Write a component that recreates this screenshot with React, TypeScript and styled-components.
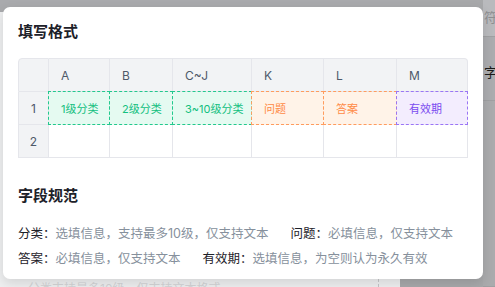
import React from "react";
import styled, { createGlobalStyle } from "styled-components";

const GlobalStyle = createGlobalStyle`
    html, body {
        margin: 0;
        padding: 0;
        width: 495px;
        height: 287px;
        overflow: hidden;
        font-family: Inter, "Noto Sans CJK SC", "Noto Sans", sans-serif;
    }
    * {
        box-sizing: border-box;
    }
`;

type Tone = "green" | "orange" | "purple";

const TONES: Record<Tone, { text: string; bg: string; border: string }> = {
    green: { text: "#13c07f", bg: "#e5faf1", border: "#22c98d" },
    orange: { text: "#ff8a45", bg: "#fff3e8", border: "#ff9c5e" },
    purple: { text: "#7a4cf0", bg: "#f3edfe", border: "#9a75f5" },
};

// ---- page behind the dialog (under the mask) ----

const Page = styled.div`
    position: relative;
    display: flex;
    width: 495px;
    height: 287px;
    background: #a9aaad;
`;

const LeftPane = styled.div`
    width: 400px;
    display: flex;
    flex-direction: column;
    padding-top: 12px;
`;

const LightArea = styled.div`
    flex: 1;
    display: flex;
    background: #eeeff0;
`;

const MainColumn = styled.div`
    width: 379px;
    display: flex;
    flex-direction: column;
    justify-content: flex-end;
    padding: 0 0 0 28px;
    border-right: 1px dashed #c4c5c8;
    overflow: hidden;
`;

const FaintText = styled.div`
    font-size: 12px;
    line-height: 16px;
    color: #d3d4d6;
    white-space: nowrap;
    margin-bottom: -10px;
`;

const Gutter = styled.div`
    width: 83px;
    background: #a7a8aa;
`;

const SideStrip = styled.div`
    flex: 1;
    display: flex;
    flex-direction: column;
    overflow: hidden;
    white-space: nowrap;
`;

const SideCell = styled.div<{ $h?: number; $bg: string; $color: string; $pad?: number }>`
    height: ${(p) => (p.$h ? `${p.$h}px` : "auto")};
    flex: ${(p) => (p.$h ? "none" : 1)};
    background: ${(p) => p.$bg};
    color: ${(p) => p.$color};
    font-size: 13px;
    line-height: 20px;
    padding: ${(p) => p.$pad ?? 7}px 0 0 1px;
    border-bottom: 1px solid #9fa0a2;
`;

// ---- dialog ----

const Dialog = styled.div`
    position: absolute;
    left: 3px;
    top: 7px;
    width: 480px;
    height: 272px;
    padding: 14px 15px 0 15px;
    background: #fff;
    border-radius: 7px;
    box-shadow: 0 4px 12px rgba(0, 0, 0, 0.12);
`;

const Title = styled.h3<{ $top?: number }>`
    margin: ${(p) => p.$top ?? 0}px 0 0 0;
    font-size: 15px;
    line-height: 22px;
    font-weight: 600;
    color: #1d2129;
`;

const Sheet = styled.div`
    margin-top: 15px;
    display: grid;
    grid-template-columns: 31px 61px 63px 79px 72px 73px 71px;
    grid-template-rows: 34px 33px 33px;
`;

const Cell = styled.div<{ $head?: boolean; $first?: boolean; $row?: number; $col?: number; $tone?: Tone }>`
    position: relative;
    display: flex;
    align-items: center;
    justify-content: ${(p) => (p.$first ? "center" : "flex-start")};
    padding-left: ${(p) => (p.$first ? 0 : 12)}px;
    font-size: ${(p) => (p.$tone ? 11 : 12)}px;
    color: ${(p) => (p.$tone ? TONES[p.$tone].text : "#4e5969")};
    background: ${(p) => (p.$tone ? TONES[p.$tone].bg : p.$head || p.$first ? "#f2f3f5" : "#fff")};
    border-right: 1px solid #e5e6eb;
    border-bottom: 1px solid #e5e6eb;
    border-top: ${(p) => (p.$row === 0 ? "1px solid #e5e6eb" : "none")};
    border-left: ${(p) => (p.$col === 0 ? "1px solid #e5e6eb" : "none")};
    border-top-left-radius: ${(p) => (p.$row === 0 && p.$col === 0 ? 4 : 0)}px;
    border-top-right-radius: ${(p) => (p.$row === 0 && p.$col === 6 ? 4 : 0)}px;
    white-space: nowrap;

    ${(p) =>
        p.$tone &&
        `
        border-color: ${TONES[p.$tone].bg};
        &::after {
            content: "";
            position: absolute;
            top: -1px;
            left: -1px;
            right: -1px;
            bottom: -1px;
            border: 1px dashed ${TONES[p.$tone].border};
            pointer-events: none;
        }
    `}
`;

const Rules = styled.div`
    margin-top: 17px;
    display: flex;
    flex-wrap: wrap;
    column-gap: 22px;
    row-gap: 5px;
    font-size: 12.5px;
    line-height: 20px;
`;

const Rule = styled.span`
    white-space: nowrap;
`;

const RuleLabel = styled.span`
    color: #1d2129;
`;

const RuleValue = styled.span`
    color: #86909c;
`;

const columns = ["A", "B", "C~J", "K", "L", "M"];

const sampleRow: { text: string; tone: Tone }[] = [
    { text: "1级分类", tone: "green" },
    { text: "2级分类", tone: "green" },
    { text: "3~10级分类", tone: "green" },
    { text: "问题", tone: "orange" },
    { text: "答案", tone: "orange" },
    { text: "有效期", tone: "purple" },
];

const rules = [
    { label: "分类：", value: "选填信息，支持最多10级，仅支持文本" },
    { label: "问题：", value: "必填信息，仅支持文本" },
    { label: "答案：", value: "必填信息，仅支持文本" },
    { label: "有效期：", value: "选填信息，为空则认为永久有效" },
];

export default function App() {
    return (
        <>
            <GlobalStyle />
            <Page>
                <LeftPane>
                    <LightArea>
                        <MainColumn>
                            <FaintText>分类支持最多10级，仅支持文本格式</FaintText>
                        </MainColumn>
                    </LightArea>
                </LeftPane>
                <Gutter />
                <SideStrip>
                    <SideCell $h={37} $bg="#b9babd" $color="#8d8e91">
                        符
                    </SideCell>
                    <SideCell $h={64} $bg="#abacaf" $color="#1a1a1a" $pad={25}>
                        字符
                    </SideCell>
                    <SideCell $bg="#aaabad" $color="#1a1a1a" />
                </SideStrip>

                <Dialog>
                    <Title>填写格式</Title>
                    <Sheet>
                        <Cell $head $first $row={0} $col={0} />
                        {columns.map((c, i) => (
                            <Cell key={c} $head $row={0} $col={i + 1}>
                                {c}
                            </Cell>
                        ))}
                        <Cell $first $row={1} $col={0}>
                            1
                        </Cell>
                        {sampleRow.map((c, i) => (
                            <Cell key={c.text} $tone={c.tone} $row={1} $col={i + 1}>
                                {c.text}
                            </Cell>
                        ))}
                        <Cell $first $row={2} $col={0}>
                            2
                        </Cell>
                        {columns.map((c, i) => (
                            <Cell key={"r2" + c} $row={2} $col={i + 1} />
                        ))}
                    </Sheet>
                    <Title $top={27}>字段规范</Title>
                    <Rules>
                        {rules.map((r) => (
                            <Rule key={r.label}>
                                <RuleLabel>{r.label}</RuleLabel>
                                <RuleValue>{r.value}</RuleValue>
                            </Rule>
                        ))}
                    </Rules>
                </Dialog>
            </Page>
        </>
    );
}
